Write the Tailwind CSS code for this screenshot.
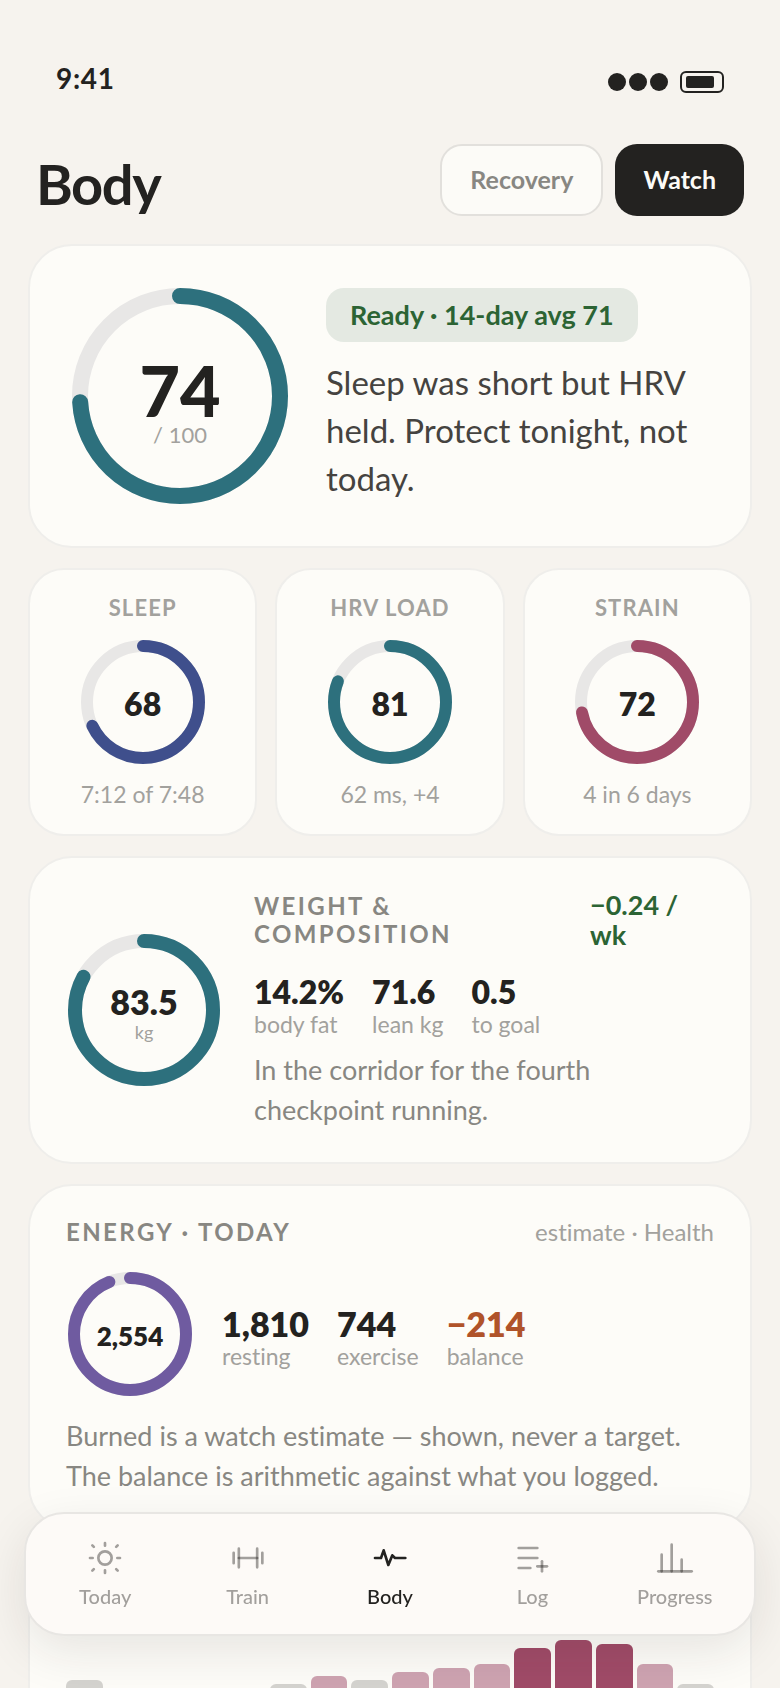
<!DOCTYPE html>
<html lang="en">

<head>
    <meta charset="UTF-8">
    <meta name="viewport" content="width=device-width, initial-scale=1.0">
    <title>Body</title>

    <script src="https://cdn.jsdelivr.net/npm/@tailwindcss/browser@4"></script>
</head>

<body class="h-screen overflow-hidden bg-[#f6f3ee] font-['Lato','Open_Sans',sans-serif] text-[#232220] [font-variant-ligatures:none]">
    <div class="h-full overflow-y-auto [scrollbar-width:none]">
        <!-- Status bar -->
        <div class="flex h-36 items-center justify-between pt-4 pr-14 pl-14">
            <span class="pb-1 text-[28px] leading-8 font-bold tracking-wide">9:41</span>
            <div class="flex items-center gap-3 pt-1">
                <div class="flex gap-[3px]">
                    <span class="size-[18px] rounded-full bg-[#232220]"></span>
                    <span class="size-[18px] rounded-full bg-[#232220]"></span>
                    <span class="size-[18px] rounded-full bg-[#232220]"></span>
                </div>
                <div class="h-[22px] w-11 rounded-md border-2 border-[#232220] px-1 py-[3px]">
                    <div class="h-3 w-7 rounded-xs bg-[#232220]"></div>
                </div>
            </div>
        </div>

        <!-- Header -->
        <header class="flex items-center justify-between px-9">
            <h1 class="pt-2 text-[56px] leading-[60px] font-bold tracking-tight">Body</h1>
            <div class="flex gap-3">
                <button type="button" class="h-18 rounded-[22px] border-2 border-[#e2e0dc] bg-[#fcfbf7] px-7 text-[25px] font-bold text-[#888782]">Recovery</button>
                <button type="button" class="h-18 rounded-[22px] bg-[#232220] px-7 text-[25px] font-bold text-[#fcfbf7]">Watch</button>
            </div>
        </header>

        <main class="flex flex-col gap-5 px-7 pt-7 pb-52">
            <!-- Readiness -->
            <section class="flex gap-9 rounded-[44px] border-2 border-[#efeeeb] bg-[#fdfcf8] p-10">
                <div class="relative size-[220px] shrink-0">
                    <svg class="size-full -rotate-90" viewBox="0 0 220 220" fill="none" stroke-width="16">
                        <circle cx="110" cy="110" r="100" stroke="#e8e7e6" />
                        <circle cx="110" cy="110" r="100" stroke="#2d707d" pathLength="100" stroke-dasharray="74 100" stroke-linecap="round" />
                    </svg>
                    <div class="absolute inset-0 flex flex-col items-center justify-center pt-3">
                        <span class="text-[70px] leading-[66px] font-black">74</span>
                        <span class="text-[22px] leading-6 text-[#a2a19d]">/ 100</span>
                    </div>
                </div>
                <div class="flex flex-col items-start gap-4 pt-[2px]">
                    <span class="rounded-[18px] bg-[#e4e9e2] px-6 py-3 text-[27px] leading-[30px] font-bold text-[#2c6434]">Ready · 14-day avg 71</span>
                    <p class="text-[33px] leading-12 text-[#454340]">Sleep was short but HRV held. Protect tonight, not today.</p>
                </div>
            </section>

            <!-- Signals -->
            <div class="grid grid-cols-3 gap-[18px]">
                <section class="flex flex-col items-center rounded-[36px] border-2 border-[#efeeeb] bg-[#fdfcf8] py-6">
                    <h2 class="text-[22px] leading-7 font-bold tracking-wider text-[#a2a19d]">SLEEP</h2>
                    <div class="relative my-4 size-32">
                        <svg class="size-full -rotate-90" viewBox="0 0 128 128" fill="none" stroke-width="12">
                            <circle cx="64" cy="64" r="56" stroke="#e8e7e6" />
                            <circle cx="64" cy="64" r="56" stroke="#3f4f8c" pathLength="100" stroke-dasharray="68 100" stroke-linecap="round" />
                        </svg>
                        <span class="absolute inset-0 flex items-center justify-center pt-1 text-[32px] font-extrabold">68</span>
                    </div>
                    <p class="text-[23px] leading-6 text-[#a2a19d] pb-1">7:12 of 7:48</p>
                </section>
                <section class="flex flex-col items-center rounded-[36px] border-2 border-[#efeeeb] bg-[#fdfcf8] py-6">
                    <h2 class="text-[22px] leading-7 font-bold tracking-wider text-[#a2a19d]">HRV LOAD</h2>
                    <div class="relative my-4 size-32">
                        <svg class="size-full -rotate-90" viewBox="0 0 128 128" fill="none" stroke-width="12">
                            <circle cx="64" cy="64" r="56" stroke="#e8e7e6" />
                            <circle cx="64" cy="64" r="56" stroke="#2d707d" pathLength="100" stroke-dasharray="81 100" stroke-linecap="round" />
                        </svg>
                        <span class="absolute inset-0 flex items-center justify-center pt-1 text-[32px] font-extrabold">81</span>
                    </div>
                    <p class="text-[23px] leading-6 text-[#a2a19d] pb-1">62 ms, +4</p>
                </section>
                <section class="flex flex-col items-center rounded-[36px] border-2 border-[#efeeeb] bg-[#fdfcf8] py-6">
                    <h2 class="text-[22px] leading-7 font-bold tracking-wider text-[#a2a19d]">STRAIN</h2>
                    <div class="relative my-4 size-32">
                        <svg class="size-full -rotate-90" viewBox="0 0 128 128" fill="none" stroke-width="12">
                            <circle cx="64" cy="64" r="56" stroke="#e8e7e6" />
                            <circle cx="64" cy="64" r="56" stroke="#a04b68" pathLength="100" stroke-dasharray="72 100" stroke-linecap="round" />
                        </svg>
                        <span class="absolute inset-0 flex items-center justify-center pt-1 text-[32px] font-extrabold">72</span>
                    </div>
                    <p class="text-[23px] leading-6 text-[#a2a19d] pb-1">4 in 6 days</p>
                </section>
            </div>

            <!-- Weight -->
            <section class="flex items-center gap-8 rounded-[44px] border-2 border-[#efeeeb] bg-[#fdfcf8] px-9 py-8">
                <div class="relative size-[156px] shrink-0">
                    <svg class="size-full -rotate-90" viewBox="0 0 156 156" fill="none" stroke-width="14">
                        <circle cx="78" cy="78" r="69" stroke="#e8e7e6" />
                        <circle cx="78" cy="78" r="69" stroke="#2d707d" pathLength="100" stroke-dasharray="83 100" stroke-linecap="round" />
                    </svg>
                    <div class="absolute inset-0 flex flex-col items-center justify-center pt-2">
                        <span class="text-[34px] leading-9 font-extrabold">83.5</span>
                        <span class="text-lg leading-6 text-[#a2a19d]">kg</span>
                    </div>
                </div>
                <div class="flex-1">
                    <div class="flex justify-between">
                        <h2 class="w-60 pt-[2px] text-2xl leading-7 font-bold tracking-widest text-[#888782]">WEIGHT &amp; COMPOSITION</h2>
                        <p class="w-31 pr-4 text-[27px] leading-[30px] font-bold text-[#2c6434]">−0.24 / wk</p>
                    </div>
                    <dl class="mt-6 mb-3 flex gap-7">
                        <div class="flex flex-col-reverse">
                            <dt class="text-[23px] leading-7 text-[#a2a19d]">body fat</dt>
                            <dd class="text-[32px] leading-9 font-extrabold">14.2%</dd>
                        </div>
                        <div class="flex flex-col-reverse">
                            <dt class="text-[23px] leading-7 text-[#a2a19d]">lean kg</dt>
                            <dd class="text-[32px] leading-9 font-extrabold">71.6</dd>
                        </div>
                        <div class="flex flex-col-reverse">
                            <dt class="text-[23px] leading-7 text-[#a2a19d]">to goal</dt>
                            <dd class="text-[32px] leading-9 font-extrabold">0.5</dd>
                        </div>
                    </dl>
                    <p class="max-w-96 text-[27px] leading-10 text-[#888782]">In the corridor for the fourth checkpoint running.</p>
                </div>
            </section>

            <!-- Energy -->
            <section class="rounded-[44px] border-2 border-[#efeeeb] bg-[#fdfcf8] px-9 py-8">
                <div class="flex items-center justify-between">
                    <h2 class="text-2xl leading-7 font-bold tracking-widest text-[#888782]">ENERGY · TODAY</h2>
                    <p class="text-2xl leading-7 text-[#a2a19d]">estimate · Health</p>
                </div>
                <div class="mt-6 mb-[18px] flex items-center gap-7">
                    <div class="relative size-32 shrink-0">
                        <svg class="size-full -rotate-90" viewBox="0 0 128 128" fill="none" stroke-width="12">
                            <circle cx="64" cy="64" r="56" stroke="#e8e7e6" />
                            <circle cx="64" cy="64" r="56" stroke="#6f5ba0" pathLength="100" stroke-dasharray="94 100" stroke-linecap="round" />
                        </svg>
                        <span class="absolute inset-0 flex items-center justify-center pt-1 text-[26px] font-extrabold">2,554</span>
                    </div>
                    <dl class="flex gap-7 pt-2">
                        <div class="flex flex-col-reverse">
                            <dt class="text-[23px] leading-7 text-[#a2a19d]">resting</dt>
                            <dd class="text-[34px] leading-9 font-extrabold">1,810</dd>
                        </div>
                        <div class="flex flex-col-reverse">
                            <dt class="text-[23px] leading-7 text-[#a2a19d]">exercise</dt>
                            <dd class="text-[34px] leading-9 font-extrabold">744</dd>
                        </div>
                        <div class="flex flex-col-reverse">
                            <dt class="text-[23px] leading-7 text-[#a2a19d]">balance</dt>
                            <dd class="text-[34px] leading-9 font-extrabold text-[#b0532a]">−214</dd>
                        </div>
                    </dl>
                </div>
                <p class="text-[27px] leading-10 text-[#888782]">Burned is a watch estimate — shown, never a target.<br>The balance is arithmetic against what you logged.</p>
            </section>

            <!-- Strain history -->
            <section class="rounded-[44px] border-2 border-[#efeeeb] bg-[#fdfcf8] px-9 py-8">
                <div class="flex h-36 items-end gap-1">
                    <span class="flex-1 rounded-t-md bg-[#d4d3cf]" style="height: 48px"></span>
                    <span class="flex-1 rounded-t-md bg-[#d4d3cf]" style="height: 32px"></span>
                    <span class="flex-1 rounded-t-md bg-[#d4d3cf]" style="height: 28px"></span>
                    <span class="flex-1 rounded-t-md bg-[#d4d3cf]" style="height: 24px"></span>
                    <span class="flex-1 rounded-t-md bg-[#d4d3cf]" style="height: 36px"></span>
                    <span class="flex-1 rounded-t-md bg-[#d4d3cf]" style="height: 44px"></span>
                    <span class="flex-1 rounded-t-md bg-[#cea3b1]" style="height: 52px"></span>
                    <span class="flex-1 rounded-t-md bg-[#d4d3cf]" style="height: 48px"></span>
                    <span class="flex-1 rounded-t-md bg-[#cea3b1]" style="height: 56px"></span>
                    <span class="flex-1 rounded-t-md bg-[#cea3b1]" style="height: 60px"></span>
                    <span class="flex-1 rounded-t-md bg-[#cea3b1]" style="height: 64px"></span>
                    <span class="flex-1 rounded-t-md bg-[#a04b68]" style="height: 80px"></span>
                    <span class="flex-1 rounded-t-md bg-[#a04b68]" style="height: 88px"></span>
                    <span class="flex-1 rounded-t-md bg-[#a04b68]" style="height: 84px"></span>
                    <span class="flex-1 rounded-t-md bg-[#cea3b1]" style="height: 64px"></span>
                    <span class="flex-1 rounded-t-md bg-[#d4d3cf]" style="height: 44px"></span>
                </div>
            </section>
        </main>
    </div>

    <!-- Tab bar -->
    <nav class="fixed inset-x-6 bottom-13 grid grid-cols-5 rounded-[40px] border-2 border-[#e8e6e3] bg-[#fdfaf7] px-2 pt-6 pb-6 text-xl leading-7 font-medium text-[#232220]/42 shadow-[0_16px_48px_rgba(35,34,32,0.1)]">
        <a href="#today" class="flex flex-col items-center gap-1">
            <svg class="size-10" viewBox="0 0 24 24" fill="none" stroke="currentColor" stroke-width="1.6" stroke-linecap="round">
                <circle cx="12" cy="12" r="4" />
                <path d="M12 3v1.6M12 19.4V21M3 12h1.6M19.4 12H21M4.4 4.4l.9.9M18.7 18.7l.9.9M4.4 19.6l.9-.9M18.7 5.3l.9-.9" />
            </svg>
            Today
        </a>
        <a href="#train" class="flex flex-col items-center gap-1">
            <svg class="size-10" viewBox="0 0 24 24" fill="none" stroke="currentColor" stroke-width="1.6" stroke-linecap="round">
                <path d="M6.5 12h11" />
                <path d="M6.5 6.4v11.2M17.5 6.4v11.2" />
                <path d="M3.4 8.9v6.2M20.6 8.9v6.2" />
            </svg>
            Train
        </a>
        <a href="#body" aria-current="page" class="flex flex-col items-center gap-1 text-[#232220]">
            <svg class="size-10" viewBox="0 0 24 24" fill="none" stroke="currentColor" stroke-width="1.6" stroke-linecap="round" stroke-linejoin="round">
                <path d="M3 12h3.6l1.6-4.6 2.8 8.8 2.4-5.8 1.6 1.6h6.2" />
            </svg>
            Body
        </a>
        <a href="#log" class="flex flex-col items-center gap-1">
            <svg class="size-10" viewBox="0 0 24 24" fill="none" stroke="currentColor" stroke-width="1.6" stroke-linecap="round">
                <path d="M4 6h11.2M4 12h11.2M4 18h7" />
                <path d="M18 14v6" />
                <path d="M15.2 17h5.8" />
            </svg>
            Log
        </a>
        <a href="#progress" class="flex flex-col items-center gap-1">
            <svg class="size-10" viewBox="0 0 24 24" fill="none" stroke="currentColor" stroke-width="1.6" stroke-linecap="round">
                <path d="M4 20V10M10 20V4M16 20v-7" />
                <path d="M2 20h20" />
            </svg>
            Progress
        </a>
    </nav>
</body>

</html>
